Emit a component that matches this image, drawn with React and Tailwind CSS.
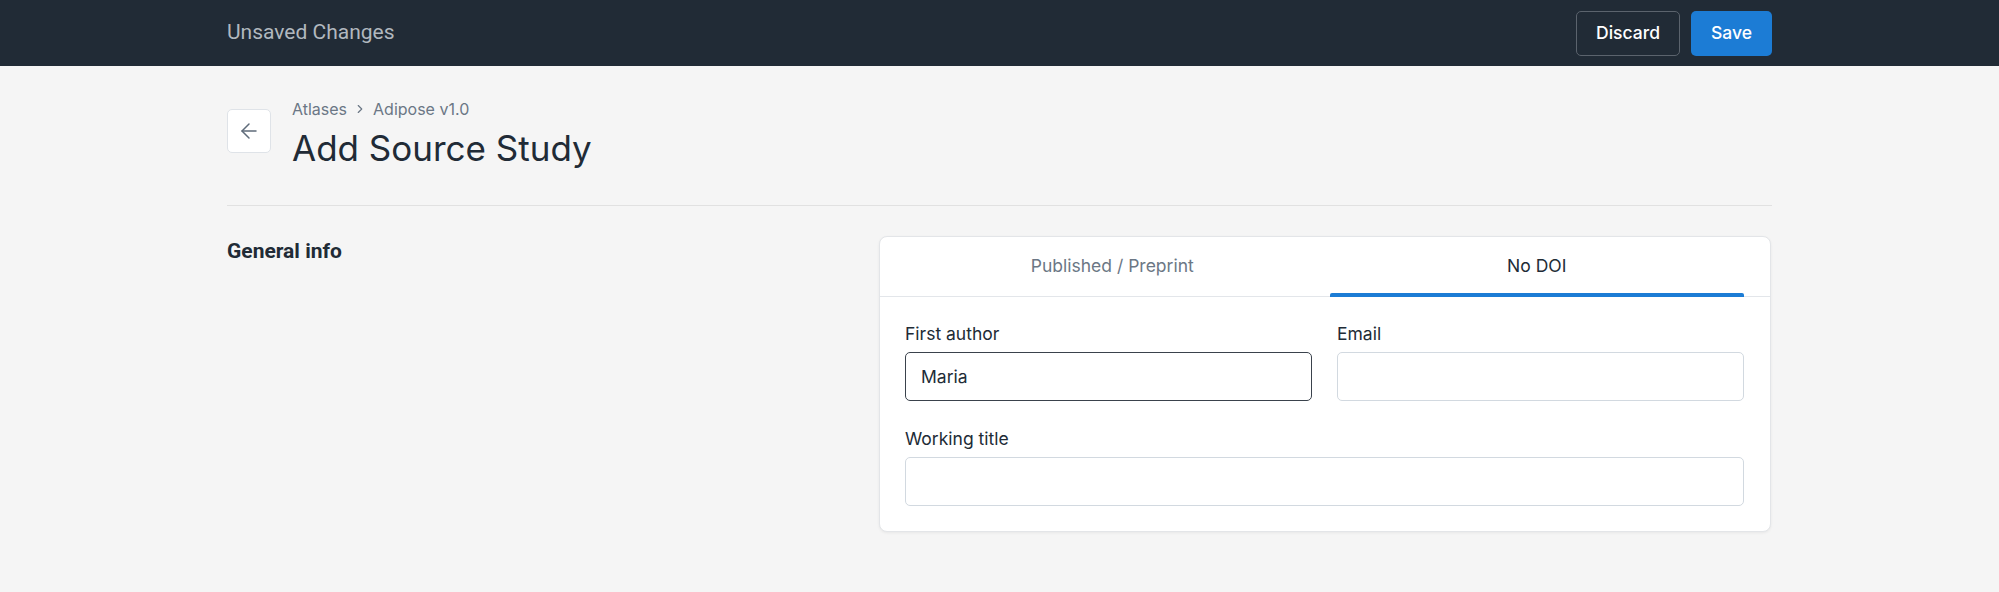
import { ArrowLeft, ChevronRight } from "lucide-react";

function Header() {
    return (
        <header className="h-[66px] bg-[#212b36]">
            <div className="mx-auto flex h-full w-[1545px] items-center justify-between">
                <span className="text-[21px] text-[#b1b8bf]" style={{ fontFamily: "Roboto, sans-serif" }}>Unsaved Changes</span>
                <div className="flex gap-[11px]">
                    <button className="h-[45px] w-[104px] rounded-[5px] border border-[#5b636d] text-[17.5px] font-medium text-white">Discard</button>
                    <button className="h-[45px] w-[81px] rounded-[5px] bg-[#1c7cd5] text-[17.5px] font-medium text-white">Save</button>
                </div>
            </div>
        </header>
    );
}

function Field({ label, value, focused }) {
    return (
        <label className="flex flex-col gap-[7px]">
            <span className="text-[17.5px] leading-[22px] text-[#212b36]">{label}</span>
            <input
                readOnly
                value={value || ""}
                className={
                    "h-[49px] w-full rounded-[5px] border bg-white px-[15px] text-[17.5px] text-[#212b36] outline-none " +
                    (focused ? "border-[#3a424c]" : "border-[#d2d9e0]")
                }
            />
        </label>
    );
}

export default function App() {
    return (
        <div className="min-h-[592px] bg-[#f5f5f5]" style={{ fontFamily: "Inter, sans-serif" }}>
            <Header />
            <main className="mx-auto w-[1545px]">
                <div className="flex items-start gap-[21px] border-b border-[#e1e1e1] pt-[33px] pb-[35px]">
                    <button className="mt-[10px] flex h-[44px] w-[44px] items-center justify-center rounded-[5px] border border-[#dfe3e8] bg-white text-[#5f6b7a]">
                        <ArrowLeft size={24} strokeWidth={1.5} />
                    </button>
                    <div className="flex flex-col gap-[7px]">
                        <div className="flex items-center gap-[6px] text-[16px] leading-5 text-[#6b7785]">
                            <span>Atlases</span>
                            <ChevronRight size={14} strokeWidth={2} />
                            <span>Adipose v1.0</span>
                        </div>
                        <h1 className="text-[35px] leading-[44px] text-[#212b36]">Add Source Study</h1>
                    </div>
                </div>
                <div className="flex items-start justify-between pt-[30px]">
                    <h2 className="mt-[1px] text-[21px] font-bold leading-[28px] text-[#212b36]" style={{ fontFamily: "Roboto, sans-serif" }}>General info</h2>
                    <div className="mr-[1px] w-[892px] rounded-[8px] border border-[#e3e5e8] bg-white shadow-[0_1px_3px_rgba(0,0,0,0.06)]">
                        <div className="flex h-[60px] gap-[10px] border-b border-[#e3e6ea] pl-[25px] pr-[26px]">
                            <div className="flex flex-1 items-center justify-center text-[17.5px] text-[#6b7785]">Published / Preprint</div>
                            <div className="relative flex flex-1 items-center justify-center text-[17.5px] text-[#212b36]">
                                No DOI
                                <span className="absolute bottom-[-1px] left-0 right-0 h-[4px] rounded-t-[2px] bg-[#1c7cd5]" />
                            </div>
                        </div>
                        <div className="flex flex-col gap-[27px] pt-[26px] pb-[25px] pl-[25px] pr-[26px]">
                            <div className="grid grid-cols-2 gap-[25px]">
                                <Field label="First author" value="Maria" focused />
                                <Field label="Email" />
                            </div>
                            <Field label="Working title" />
                        </div>
                    </div>
                </div>
            </main>
        </div>
    );
}
